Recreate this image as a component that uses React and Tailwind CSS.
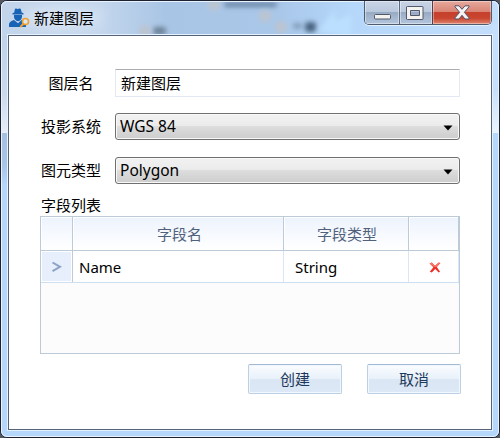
import React from "react";

const FONT = "font-['Noto_Sans','Noto_Sans_CJK_SC',sans-serif]";
const CJK = "font-['Noto_Sans_CJK_SC',sans-serif] font-normal";

function AppIcon() {
  return (
    <svg className="h-5 w-[21px] shrink-0" viewBox="0 0 21 20">
      <path d="M5.2 4.500 6 .8Q7 0 8 .8q1 .5 2.200-.2 1-.5 1.600.3l.9 3.600 1.800.7v1.200H3.500V5.200z" fill="#1763b5" />
      <path d="M5 7h8v2q-.4 3.500-4 4.200Q5.400 12.500 5 9z" fill="#1763b5" />
      <path d="M0 19v-3q.5-2.500 5-4l4 3.300 3.500-3.300q4 1 4.500 3V19z" fill="#1763b5" />
      <circle cx="16.500" cy="13.500" r="3" fill="#d7e8f8" stroke="#f2a128" strokeWidth="1.600" />
      <path d="m14.300 16-3 3" stroke="#f2a128" strokeWidth="2" />
    </svg>
  );
}

function Caption() {
  return (
    <div className="absolute left-[364px] top-px flex h-6 w-[128px] overflow-hidden rounded-b-[5px] border border-t-0 border-[#4e5c70] shadow-[0_1px_0_#e4f0fc]">
      <div className="flex w-[35px] items-center justify-center border-r border-[#5c6a7e] bg-[linear-gradient(#c9d4e5_0,#bac8dd_46%,#99abc3_50%,#b3c6dd_100%)] shadow-[inset_0_0_0_1px_#ffffff70]">
        <svg width="18" height="6" className="ml-[2px] mt-[9px]" viewBox="0 0 18 6">
          <rect x=".5" y=".5" width="16" height="4.500" rx="1" fill="#f4f3f0" stroke="#505a6c" />
        </svg>
      </div>
      <div className="flex w-[33px] items-center justify-center border-r border-[#5c3a48] bg-[linear-gradient(#c9d4e5_0,#bac8dd_46%,#99abc3_50%,#b3c6dd_100%)] shadow-[inset_0_0_0_1px_#ffffff70]">
        <svg width="18" height="14" className="ml-[-2px]" viewBox="0 0 18 14">
          <path fillRule="evenodd" d="M1.500.5h15q.5 0 .5.500v12q0 .5-.5.500h-15Q0.500 13.500.5 13V1q0-.5 1-.5zM4.500 4.500v5h9v-5z" fill="#f4f3f0" stroke="#505a6c" />
        </svg>
      </div>
      <div className="flex flex-1 items-center justify-center bg-[linear-gradient(#e6a99c_0,#d98576_46%,#c6402c_50%,#c8452f_75%,#df8670_100%)] shadow-[inset_0_0_0_1px_#ffffff60]">
        <svg width="16" height="15" viewBox="0 0 16 15">
          <path d="M1 .8h4L8 4.300 11 .8h4v1L10.400 7.300 15 12.800v1.200h-4L8 10.300 5 14H1v-1.200L5.600 7.300 1 1.800z" fill="#f4f3f2" stroke="#55506a" strokeLinejoin="round" />
        </svg>
      </div>
    </div>
  );
}

function Glass() {
  return (
    <svg className="absolute inset-0 h-full w-full" viewBox="0 0 500 438">
      <defs>
        <linearGradient id="top" x1="0" x2="1">
          <stop offset="0" stopColor="#c3d5ea" />
          <stop offset=".2" stopColor="#c4d7ed" />
          <stop offset=".33" stopColor="#a9c5e5" />
          <stop offset=".56" stopColor="#a9c7e9" />
          <stop offset=".7" stopColor="#b5d7fa" />
          <stop offset="1" stopColor="#c3defa" />
        </linearGradient>
        <linearGradient id="side" x1="0" y1="0" x2="0" y2="1">
          <stop offset="0" stopColor="#c6dffb" />
          <stop offset=".6" stopColor="#c6e0fb" />
          <stop offset="1" stopColor="#eaf4fe" />
        </linearGradient>
        <linearGradient id="left" x1="0" y1="0" x2="0" y2="1">
          <stop offset="0" stopColor="#bfd3eb" />
          <stop offset=".6" stopColor="#cbd9ec" />
          <stop offset="1" stopColor="#e8edf6" />
        </linearGradient>
        <linearGradient id="leftLow" x1="0" y1="0" x2="0" y2="1">
          <stop offset="0" stopColor="#a6bfe0" />
          <stop offset=".6" stopColor="#a8c4e6" />
          <stop offset="1" stopColor="#b5d7fb" />
        </linearGradient>
        <filter id="soft" filterUnits="userSpaceOnUse" x="0" y="-20" width="500" height="80">
          <feGaussianBlur stdDeviation="2.400" />
        </filter>
        <filter id="glow" filterUnits="userSpaceOnUse" x="0" y="-20" width="500" height="80">
          <feGaussianBlur stdDeviation="7" />
        </filter>
      </defs>
      <rect width="500" height="438" fill="#b5d7fb" />
      <rect width="500" height="36" fill="url(#top)" />
      <rect x="492" y="25" width="8" height="108" fill="url(#side)" />
      <rect x="0" y="36" width="9" height="97" fill="url(#left)" />
      <rect x="0" y="133" width="9" height="52" fill="url(#leftLow)" />
      <ellipse cx="62" cy="18" rx="40" ry="10" fill="#e4edf8" opacity=".75" filter="url(#glow)" />
      <g filter="url(#soft)">
        <rect x="224" y="2" width="53" height="5" rx="2" fill="#6a85a5" />
        <rect x="153" y="27" width="13" height="8" rx="3" fill="#6b8299" />
        <rect x="293" y="23" width="9" height="6" rx="3" fill="#829bb7" />
        <rect x="305" y="22" width="11" height="10" rx="3" fill="#4a6480" />
        <path d="M318 32 335 9v12l16-6v20z" fill="#bbe0ff" />
      </g>
      <g fill="#bcc4cf" filter="url(#soft)">
        <circle cx="214" cy="5" r="6" />
        <circle cx="265" cy="16" r="6" />
        <circle cx="281" cy="27" r="6" />
        <circle cx="145" cy="31" r="6" />
      </g>
    </svg>
  );
}

function Select({ value }) {
  return (
    <div className="ml-[10px] flex w-[345px] items-center justify-between rounded-[3px] border border-[#707070] bg-[linear-gradient(#f2f2f2_0,#ebebeb_48%,#dddddd_50%,#cdcdcd_100%)] pl-[4px] pr-[6px] text-[15.5px] leading-none shadow-[inset_0_0_0_1px_#f8f8f8]">
      <span>{value}</span>
      <svg width="10" height="6" className="mt-[3px]" viewBox="0 0 10 6"><path d="M.5.500h9L5 5.500z" fill="#000" /></svg>
    </div>
  );
}

function HeadCell({ children, className = "" }) {
  return (
    <div className={`flex h-[33px] items-center justify-center border-r border-[#bdcad8] bg-[linear-gradient(#edf3fd,#ffffff)] pt-px text-[15px] text-[#50617c] shadow-[inset_1px_1px_0_#ffffff] ${CJK} ${className}`}>
      {children}
    </div>
  );
}

function Button({ children }) {
  return (
    <button className={`h-[30px] w-[94px] rounded-[2px] border border-[#bdcfe3] border-t-[#a3b9d2] bg-[linear-gradient(#fafcff_0,#e9f1fa_48%,#dbe6f4_52%,#dce8f6_100%)] pb-px text-[15px] leading-none text-[#1e395b] shadow-[inset_0_0_0_1px_#f1f7fe] ${CJK}`}>
      {children}
    </button>
  );
}

export default function App() {
  return (
    <div className={`relative h-[438px] w-[500px] overflow-hidden bg-[#55585f] text-black ${FONT}`}>
      <div className="relative h-[438px] w-[500px] overflow-hidden rounded-[7px] border border-[#1c2232] bg-[#b5d7fb]">
        <div className="absolute -inset-px"><Glass /></div>
        <div className="pointer-events-none absolute inset-0 rounded-[6px] border border-[#e8f3fd]" />
        <header className="relative flex h-[33px] items-center pl-2">
          <AppIcon />
          <h1 className={`ml-1 text-[15px] leading-none ${CJK}`}>新建图层</h1>
        </header>
        <div className="absolute -left-px -top-px"><Caption /></div>
        <main className="relative ml-[7px] mt-px h-[395px] w-[484px] border border-[#566275] bg-white shadow-[0_0_0_1px_#e6f2fe]">
          <div className="mt-[33px] flex h-[28px] items-stretch pl-[31px]">
            <div className={`flex w-[65px] items-center justify-center pr-[3px] text-[15px] ${CJK}`}>图层名</div>
            <div className={`ml-[10px] flex w-[345px] items-center rounded-[1px] border border-[#e2e9f2] border-t-[#abadb3] pl-[5px] text-[15px] ${CJK}`}>新建图层</div>
          </div>
          <div className="mt-4 flex h-[27px] pl-[31px]">
            <div className={`flex w-[65px] items-center pl-px text-[15px] ${CJK}`}>投影系统</div>
            <Select value="WGS 84" />
          </div>
          <div className="mt-[17px] flex h-[27px] pl-[31px]">
            <div className={`flex w-[65px] items-center pl-px text-[15px] ${CJK}`}>图元类型</div>
            <Select value="Polygon" />
          </div>
          <div className={`mt-[10px] h-[22px] pl-8 text-[15px] leading-[21px] ${CJK}`}>字段列表</div>
          <div className="ml-[31px] h-[138px] w-[420px] border border-[#bdcad8] bg-[#fcfcfc]">
            <div className="flex w-[418px] border-b border-[#bdcad8]">
              <HeadCell className="w-[32px]" />
              <HeadCell className="w-[211px]"><span className="pl-[3px]">字段名</span></HeadCell>
              <HeadCell className="w-[125px]"><span className="pl-[2px]">字段类型</span></HeadCell>
              <HeadCell className="w-[50px]" />
            </div>
            <div className="flex h-[32px] w-[418px] border-b border-[#cfdff2] bg-white text-[15px] leading-none">
              <div className="flex w-[32px] items-center justify-center border-r border-[#bdcad8] bg-[#e8effc] shadow-[inset_0_0_0_1px_#ffffff]">
                <svg width="10" height="10" viewBox="0 0 10 10"><path d="M.5.500 8 4.800.5 9.200" fill="none" stroke="#8ca4c7" strokeWidth="2" /></svg>
              </div>
              <div className="flex w-[211px] items-center border-r border-[#d8e6f7] pl-[6px] pt-px">Name</div>
              <div className="flex w-[125px] items-center border-r border-[#d8e6f7] pl-[11px] pt-px">String</div>
              <div className="flex w-[50px] items-center justify-center border-r border-[#d8e6f7]">
                <svg width="12" height="11" className="ml-[3px] mt-px" viewBox="0 0 13 12">
                  <path d="M.5 1.500 3 .5 6.500 4 10.500.5l2 .5-4 4.500L12 10.500l-1.500 1L6.800 7.500 3 11.500.8 10.500 4.700 5.700z" fill="#ef3026" />
                  <path d="M.8 1.500 3 .7l3.500 3.500L10.500.8l1.500.3L8 5.500 5.500 5.200z" fill="#f77e6d" />
                </svg>
              </div>
            </div>
          </div>
          <div className="mt-[10px] flex gap-[25px] pl-[239px]">
            <Button>创建</Button>
            <Button>取消</Button>
          </div>
        </main>
      </div>
    </div>
  );
}
